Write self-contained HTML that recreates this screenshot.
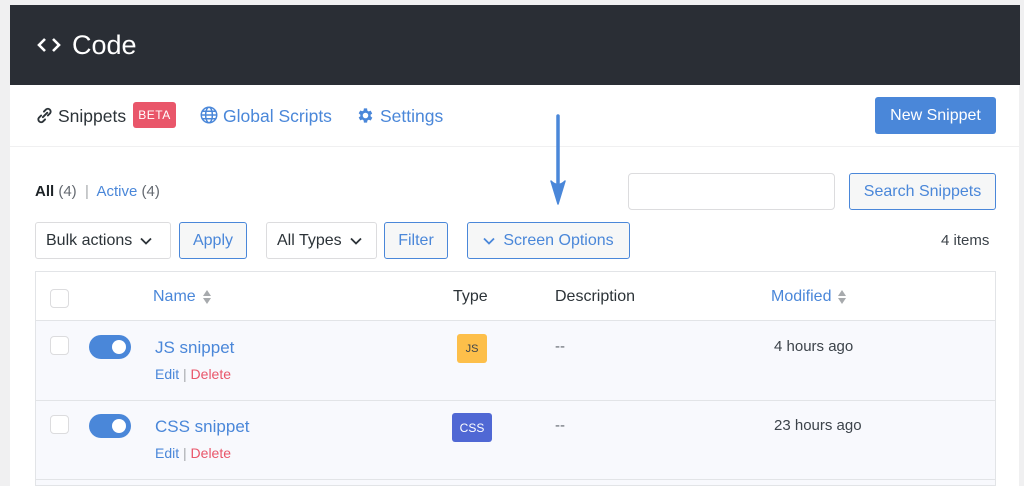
<!DOCTYPE html>
<html><head><style>
*{box-sizing:border-box;margin:0;padding:0}
body{width:1024px;height:486px;overflow:hidden;background:#f0f0f1;font-family:"Liberation Sans",sans-serif;color:#2c3338;position:relative}
.a{position:absolute}
.hdr{left:10px;top:5px;width:1010px;height:80px;background:#2a2e35;color:#fff}
.panel{left:10px;top:85px;width:1009px;height:401px;background:#fff}
.blue{color:#4a87d9}
.btn{position:absolute;border:1px solid #4a87d9;border-radius:3px;background:#f6f7f7;color:#4a87d9;font-size:16px;display:flex;align-items:center;justify-content:center}
.sel{position:absolute;border:1px solid #dcdcde;border-radius:3px;background:#fff;font-size:16px;display:flex;align-items:center;padding-left:10px;color:#2c3338}
.cb{position:absolute;width:19px;height:19px;border:1px solid #dcdcde;border-radius:4px;background:#fff}
.tog{position:absolute;width:42px;height:24px;border-radius:12px;background:#4a87d9}
.tog:after{content:"";position:absolute;right:5px;top:5px;width:14px;height:14px;border-radius:50%;background:#fff}
.sort{display:inline-block;vertical-align:middle;margin-left:6px}
</style></head><body>
<div class="a hdr">
<svg class="a" style="left:27px;top:32px" width="24" height="16" viewBox="0 0 24 16"><path d="M8 2L2 8l6 6M16 2l6 6-6 6" stroke="#fff" stroke-width="2.6" fill="none"/></svg>
<div class="a" style="left:62px;top:25px;font-size:27px">Code</div>
</div>
<div class="a panel">
<svg class="a" style="left:25px;top:21px" width="19" height="19" viewBox="0 0 17 17"><path d="M7 10l4-4M5.5 8.5l-2 2a2.5 2.5 0 003.5 3.5l2-2M11.5 8.5l2-2a2.5 2.5 0 00-3.5-3.5l-2 2" stroke="#2c3338" stroke-width="1.7" fill="none" stroke-linecap="round"/></svg>
<div class="a" style="left:48px;top:21px;font-size:17.5px">Snippets</div>
<div class="a" style="left:123px;top:17px;width:43px;height:26px;background:#e9566a;border-radius:3px;color:#fff;font-size:12px;letter-spacing:.5px;display:flex;align-items:center;justify-content:center">BETA</div>
<svg class="a" style="left:190px;top:21px" width="18" height="18" viewBox="0 0 17 17" fill="none" stroke="#4a87d9" stroke-width="1.4"><circle cx="8.5" cy="8.5" r="7.3"/><ellipse cx="8.5" cy="8.5" rx="3.2" ry="7.3"/><path d="M1.2 8.5h14.6M2.2 5h12.6M2.2 12h12.6"/></svg>
<div class="a blue" style="left:213px;top:21px;font-size:17.5px">Global Scripts</div>
<svg class="a" style="left:346px;top:21px" width="19" height="19" viewBox="0 0 24 24"><path fill="#4a87d9" fill-rule="evenodd" d="M19.4 13a7.5 7.5 0 000-2l2.1-1.6-2-3.5-2.5 1a7.6 7.6 0 00-1.7-1L15 3h-4l-.4 2.7a7.6 7.6 0 00-1.7 1l-2.5-1-2 3.5L6.5 11a7.5 7.5 0 000 2l-2.1 1.6 2 3.5 2.5-1c.5.4 1.1.8 1.7 1L11 21h4l.4-2.7c.6-.3 1.2-.6 1.7-1l2.5 1 2-3.5zM13 15.5A3.5 3.5 0 1113 8.5a3.5 3.5 0 010 7z" transform="translate(-1 0)"/></svg>
<div class="a blue" style="left:370px;top:21px;font-size:17.5px">Settings</div>
<div class="a" style="left:865px;top:12px;width:121px;height:37px;background:#4a87d9;border-radius:3px;color:#fff;font-size:16px;display:flex;align-items:center;justify-content:center">New Snippet</div>
<div class="a" style="left:0;top:61px;width:1009px;height:1px;background:#f0f0f1"></div>
<svg class="a" style="left:538px;top:28px" width="20" height="94" viewBox="0 0 20 94"><path d="M10 3v80" stroke="#4a87d9" stroke-width="3.5" stroke-linecap="round"/><path d="M3 68l7 23 7-23q-7 7-14 0z" fill="#4a87d9" stroke="#4a87d9" stroke-width="1.5" stroke-linejoin="round"/></svg>
<div class="a" style="left:25px;top:98px;font-size:15px"><b style="color:#1d2327">All</b> <span style="color:#646970">(4)</span> &nbsp;<span style="color:#a7aaad">|</span>&nbsp; <span class="blue">Active</span> <span style="color:#646970">(4)</span></div>
<div class="a" style="left:618px;top:88px;width:207px;height:37px;border:1px solid #dcdcde;border-radius:4px"></div>
<div class="btn" style="left:839px;top:88px;width:147px;height:37px">Search Snippets</div>
<div class="sel" style="left:25px;top:137px;width:136px;height:37px">Bulk actions <svg style="margin-left:8px" width="12" height="8" viewBox="0 0 12 8"><path d="M1 1.5l5 5 5-5" stroke="#2c3338" stroke-width="1.8" fill="none"/></svg></div>
<div class="btn" style="left:169px;top:137px;width:68px;height:37px">Apply</div>
<div class="sel" style="left:256px;top:137px;width:111px;height:37px">All Types <svg style="margin-left:8px" width="12" height="8" viewBox="0 0 12 8"><path d="M1 1.5l5 5 5-5" stroke="#2c3338" stroke-width="1.8" fill="none"/></svg></div>
<div class="btn" style="left:374px;top:137px;width:64px;height:37px">Filter</div>
<div class="btn" style="left:457px;top:137px;width:163px;height:37px"><svg style="margin-right:8px" width="12" height="8" viewBox="0 0 12 8"><path d="M1 1.5l5 5 5-5" stroke="#4a87d9" stroke-width="1.8" fill="none"/></svg>Screen Options</div>
<div class="a" style="left:931px;top:147px;font-size:15px;color:#3c434a">4 items</div>
<div class="a" style="left:25px;top:186px;width:961px;height:215px;border:1px solid #e2e4e7;background:#f8f9fd">
 <div class="a" style="left:0;top:0;width:959px;height:49px;background:#fff;border-bottom:1px solid #e2e4e7"></div>
 <div class="cb" style="left:14px;top:17px"></div>
 <div class="a blue" style="left:117px;top:16px;font-size:16px">Name<svg class="sort" width="10" height="16" viewBox="0 0 10 16"><path d="M5 1l4 6H1zM5 15l4-6H1z" fill="#a7aaad"/></svg></div>
 <div class="a" style="left:417px;top:16px;font-size:16px">Type</div>
 <div class="a" style="left:519px;top:16px;font-size:16px">Description</div>
 <div class="a blue" style="left:735px;top:16px;font-size:16px">Modified<svg class="sort" width="10" height="16" viewBox="0 0 10 16"><path d="M5 1l4 6H1zM5 15l4-6H1z" fill="#a7aaad"/></svg></div>
 <div class="a" style="left:0;top:128px;width:959px;height:1px;background:#e2e4e7"></div>
 <div class="cb" style="left:14px;top:64px"></div>
 <div class="tog" style="left:53px;top:63px"></div>
 <div class="a blue" style="left:119px;top:66px;font-size:17px">JS snippet</div>
 <div class="a" style="left:119px;top:94px;font-size:14px"><span class="blue">Edit</span> <span style="color:#a7aaad">|</span> <span style="color:#e9566a">Delete</span></div>
 <div class="a" style="left:421px;top:62px;width:30px;height:29px;background:#fdbf4a;border-radius:3px;font-size:11px;color:#3c434a;display:flex;align-items:center;justify-content:center">JS</div>
 <div class="a" style="left:519px;top:66px;font-size:15px;color:#646970">--</div>
 <div class="a" style="left:738px;top:66px;font-size:15px;color:#3c434a">4 hours ago</div>
 <div class="cb" style="left:14px;top:143px"></div>
 <div class="tog" style="left:53px;top:142px"></div>
 <div class="a blue" style="left:119px;top:145px;font-size:17px">CSS snippet</div>
 <div class="a" style="left:119px;top:173px;font-size:14px"><span class="blue">Edit</span> <span style="color:#a7aaad">|</span> <span style="color:#e9566a">Delete</span></div>
 <div class="a" style="left:416px;top:141px;width:40px;height:29px;background:#5068d4;border-radius:3px;font-size:12px;color:#fff;display:flex;align-items:center;justify-content:center">CSS</div>
 <div class="a" style="left:519px;top:145px;font-size:15px;color:#646970">--</div>
 <div class="a" style="left:738px;top:145px;font-size:15px;color:#3c434a">23 hours ago</div>
 <div class="a" style="left:0;top:207px;width:959px;height:1px;background:#e2e4e7"></div>
</div>
</div>
</body></html>
